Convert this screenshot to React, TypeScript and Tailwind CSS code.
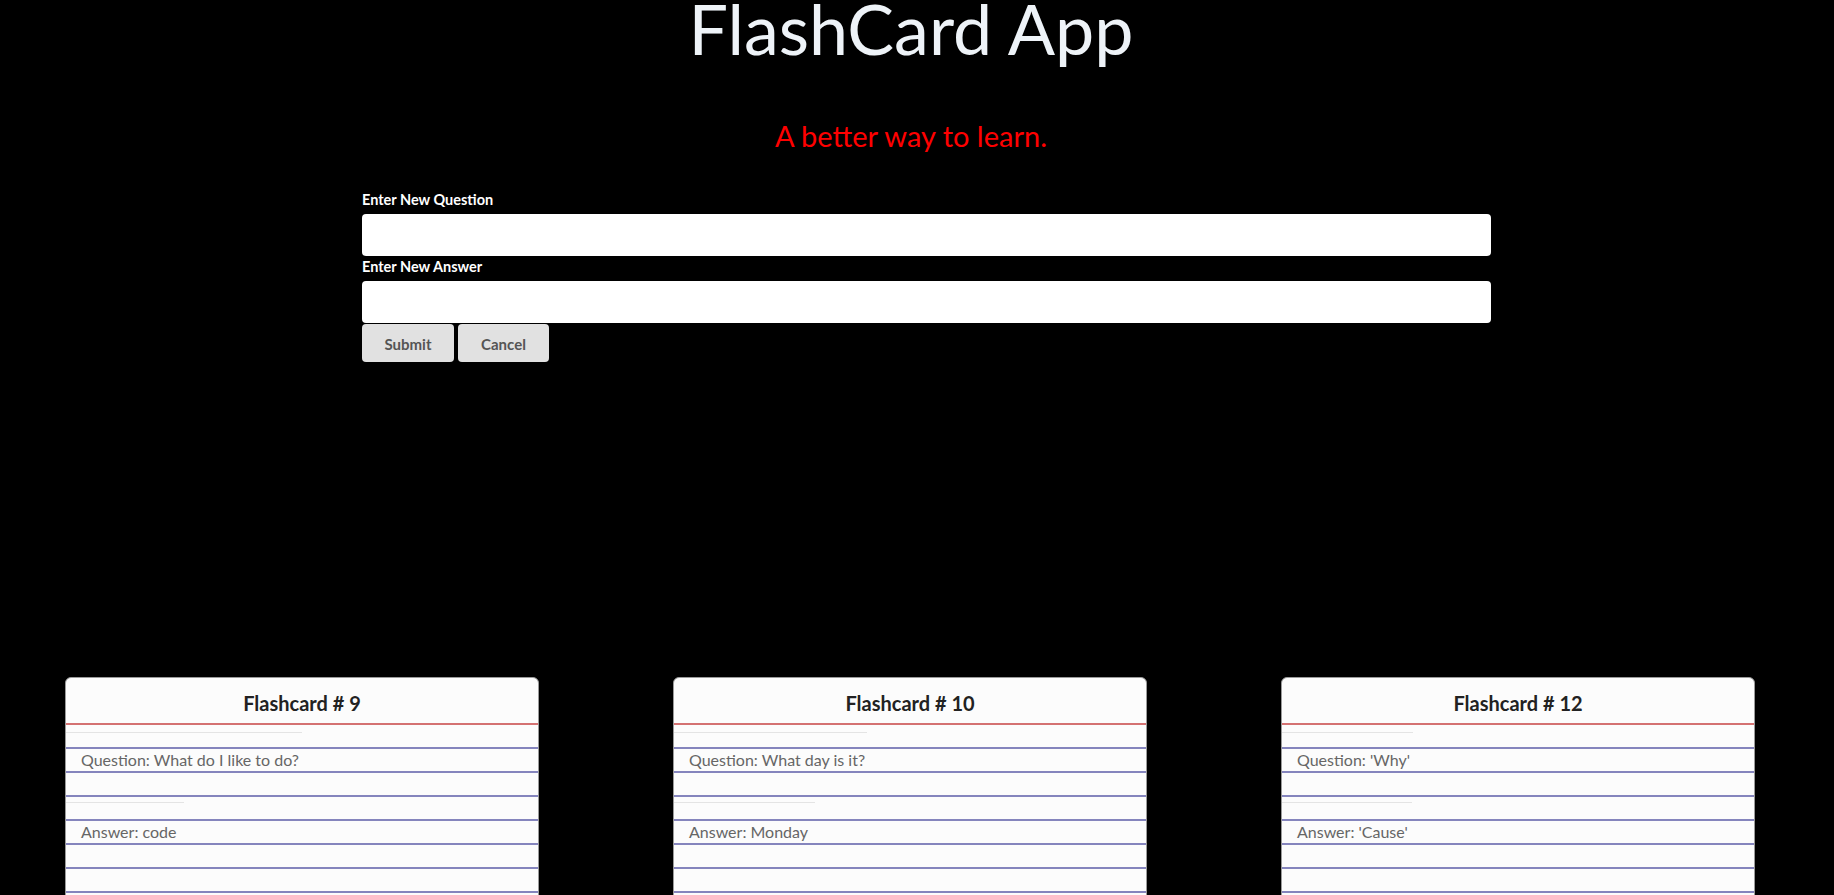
const cards = [
  { n: 9, q: "What do I like to do?", a: "code", w1: 236, w2: 118 },
  { n: 10, q: "What day is it?", a: "Monday", w1: 193, w2: 141 },
  { n: 12, q: "'Why'", a: "'Cause'", w1: 131, w2: 130 },
];

function Row({ children, className = "" }: { children?: React.ReactNode; className?: string }) {
  return <div className={`h-[24px] border-b-2 border-[#8585bd] ${className}`}>{children}</div>;
}

function Flashcard({ n, q, a, w1, w2 }: (typeof cards)[number]) {
  return (
    <div className="w-[474px] h-[260px] shrink-0 rounded-t-[6px] border border-[#9a9a9a] bg-[#fcfcfc]">
      <div className="h-[47px] border-b-2 border-[#d47272] pt-[13px] text-center text-[20px] leading-[24px] font-bold text-[#222]">
        Flashcard # {n}
      </div>
      <Row className="pt-[7px]">
        <div className="h-px bg-[#e4e4e4]" style={{ width: w1 }} />
      </Row>
      <Row>
        <p className="pl-[15px] text-[16px] leading-[22px] font-normal text-[#666]">Question: {q}</p>
      </Row>
      <Row />
      <Row className="pt-[5px]">
        <div className="h-px bg-[#e4e4e4]" style={{ width: w2 }} />
      </Row>
      <Row>
        <p className="pl-[15px] text-[16px] leading-[21px] font-normal text-[#666]">Answer: {a}</p>
      </Row>
      <Row />
      <Row />
      <Row />
    </div>
  );
}

export default function App() {
  return (
    <div className="h-[895px] overflow-hidden bg-black font-['Lato',sans-serif]">
      {/* header */}
      <div className="pr-[12px] text-center">
        <h1 className="-mt-[7px] text-[70px] leading-[70px] font-normal text-[#eef3f8]">FlashCard App</h1>
        <h2 className="mt-[56px] text-[29px] leading-[34px] text-[#ff0000]">A better way to learn.</h2>
      </div>

      {/* form */}
      <form className="ml-[362px] mt-[37px] w-[1129px]">
        <label className="block text-[14.5px] leading-[20px] font-bold text-white">Enter New Question</label>
        <input className="mt-[4px] block h-[42px] w-full rounded-[4px] bg-white" />
        <label className="mt-px block text-[14.5px] leading-[20px] font-bold text-white">Enter New Answer</label>
        <input className="mt-[4px] block h-[42px] w-full rounded-[4px] bg-white" />
        <div className="mt-px flex gap-[4px]">
          <button type="button" className="h-[38px] w-[92px] rounded-[4px] bg-[#e1e1e1] pt-[3px] text-[15px] font-bold text-[#555]">
            Submit
          </button>
          <button type="button" className="h-[38px] w-[91px] rounded-[4px] bg-[#e1e1e1] pt-[3px] text-[15px] font-bold text-[#555]">
            Cancel
          </button>
        </div>
      </form>

      {/* cards */}
      <div className="mt-[315px] flex gap-[134px] pl-[65px]">
        {cards.map((c) => (
          <Flashcard key={c.n} {...c} />
        ))}
      </div>
    </div>
  );
}
